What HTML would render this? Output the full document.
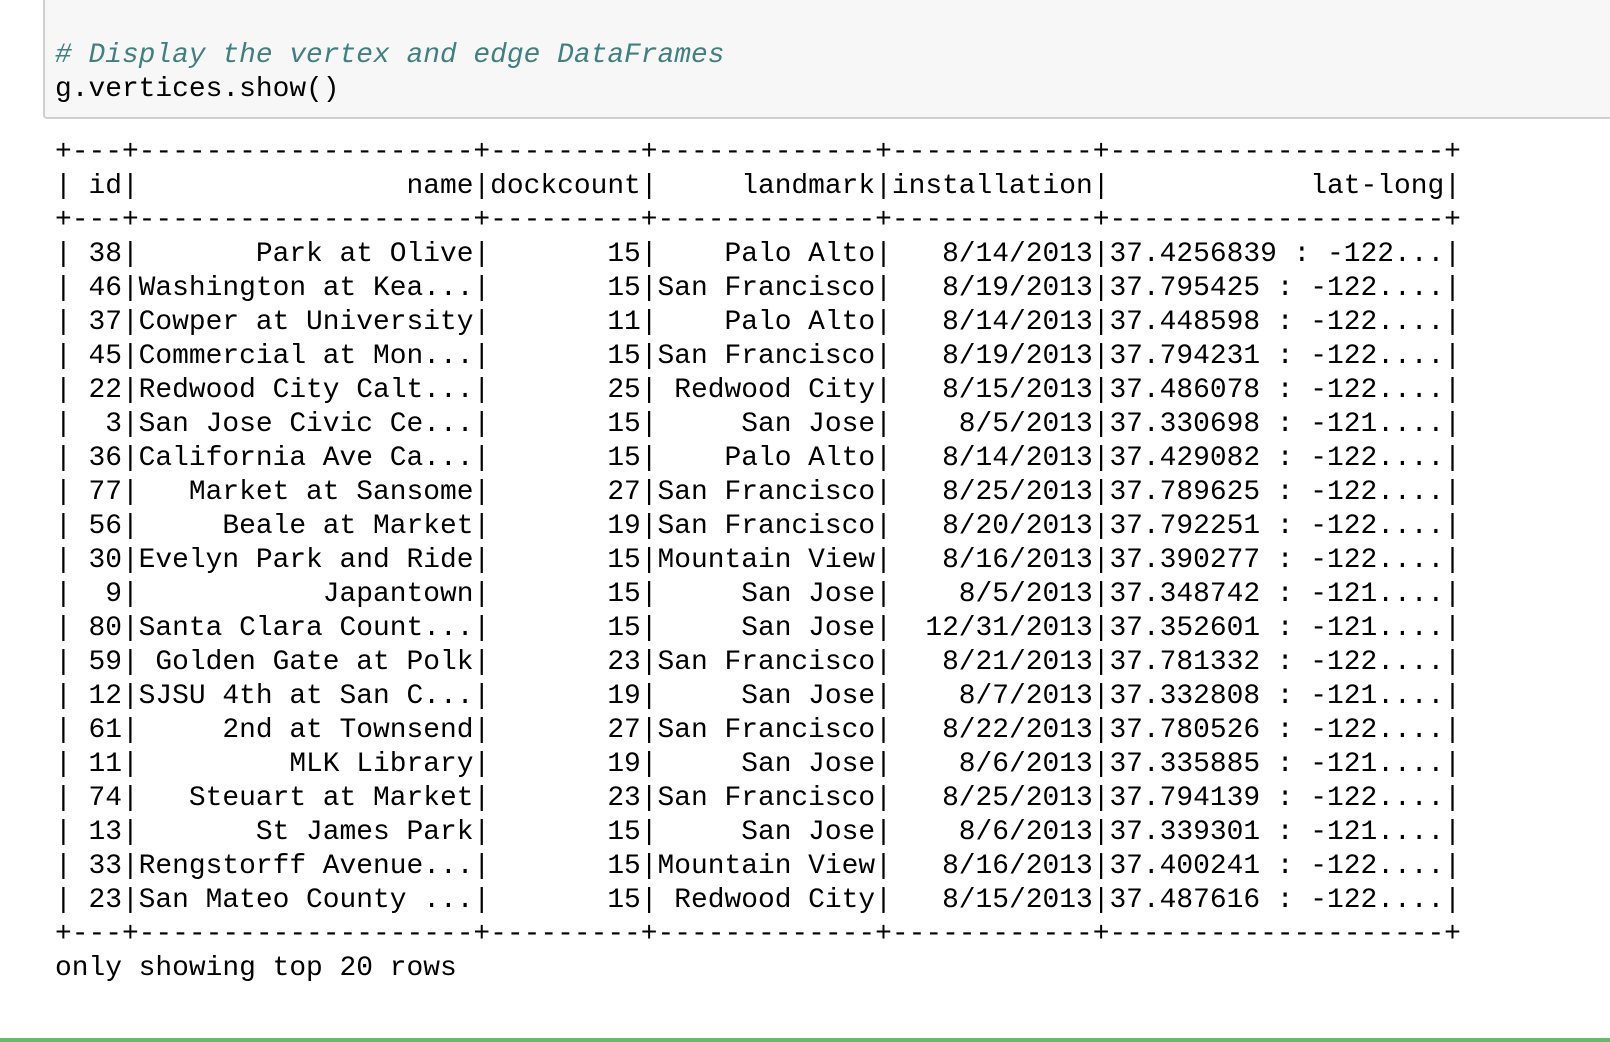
<!DOCTYPE html>
<html><head><meta charset="utf-8"><style>
body{margin:0;width:1610px;height:1042px;background:#fff;overflow:hidden;position:relative;font-family:"Liberation Mono",monospace;}
.cell{position:absolute;left:43px;top:-3px;right:-3px;height:118px;background:#f7f7f7;border:2px solid #cfcfcf;border-radius:4px;}
pre{margin:0;font-family:"Liberation Mono",monospace;font-size:27.9px;line-height:34px;color:#000;white-space:pre;}
.code{position:absolute;left:55px;top:39px;}
.cm{color:#408080;font-style:italic;}
.out{position:absolute;left:55px;top:136px;}
.green{position:absolute;left:0;right:0;top:1038px;height:4px;background:#66bb6a;}
</style></head><body>
<div class="cell"></div>
<pre class="code"><span class="cm"># Display the vertex and edge DataFrames</span>
g.vertices.show()</pre>
<pre class="out">+---+--------------------+---------+-------------+------------+--------------------+
| id|                name|dockcount|     landmark|installation|            lat-long|
+---+--------------------+---------+-------------+------------+--------------------+
| 38|       Park at Olive|       15|    Palo Alto|   8/14/2013|37.4256839 : -122...|
| 46|Washington at Kea...|       15|San Francisco|   8/19/2013|37.795425 : -122....|
| 37|Cowper at University|       11|    Palo Alto|   8/14/2013|37.448598 : -122....|
| 45|Commercial at Mon...|       15|San Francisco|   8/19/2013|37.794231 : -122....|
| 22|Redwood City Calt...|       25| Redwood City|   8/15/2013|37.486078 : -122....|
|  3|San Jose Civic Ce...|       15|     San Jose|    8/5/2013|37.330698 : -121....|
| 36|California Ave Ca...|       15|    Palo Alto|   8/14/2013|37.429082 : -122....|
| 77|   Market at Sansome|       27|San Francisco|   8/25/2013|37.789625 : -122....|
| 56|     Beale at Market|       19|San Francisco|   8/20/2013|37.792251 : -122....|
| 30|Evelyn Park and Ride|       15|Mountain View|   8/16/2013|37.390277 : -122....|
|  9|           Japantown|       15|     San Jose|    8/5/2013|37.348742 : -121....|
| 80|Santa Clara Count...|       15|     San Jose|  12/31/2013|37.352601 : -121....|
| 59| Golden Gate at Polk|       23|San Francisco|   8/21/2013|37.781332 : -122....|
| 12|SJSU 4th at San C...|       19|     San Jose|    8/7/2013|37.332808 : -121....|
| 61|     2nd at Townsend|       27|San Francisco|   8/22/2013|37.780526 : -122....|
| 11|         MLK Library|       19|     San Jose|    8/6/2013|37.335885 : -121....|
| 74|   Steuart at Market|       23|San Francisco|   8/25/2013|37.794139 : -122....|
| 13|       St James Park|       15|     San Jose|    8/6/2013|37.339301 : -121....|
| 33|Rengstorff Avenue...|       15|Mountain View|   8/16/2013|37.400241 : -122....|
| 23|San Mateo County ...|       15| Redwood City|   8/15/2013|37.487616 : -122....|
+---+--------------------+---------+-------------+------------+--------------------+
only showing top 20 rows</pre>
<div class="green"></div>
</body></html>
